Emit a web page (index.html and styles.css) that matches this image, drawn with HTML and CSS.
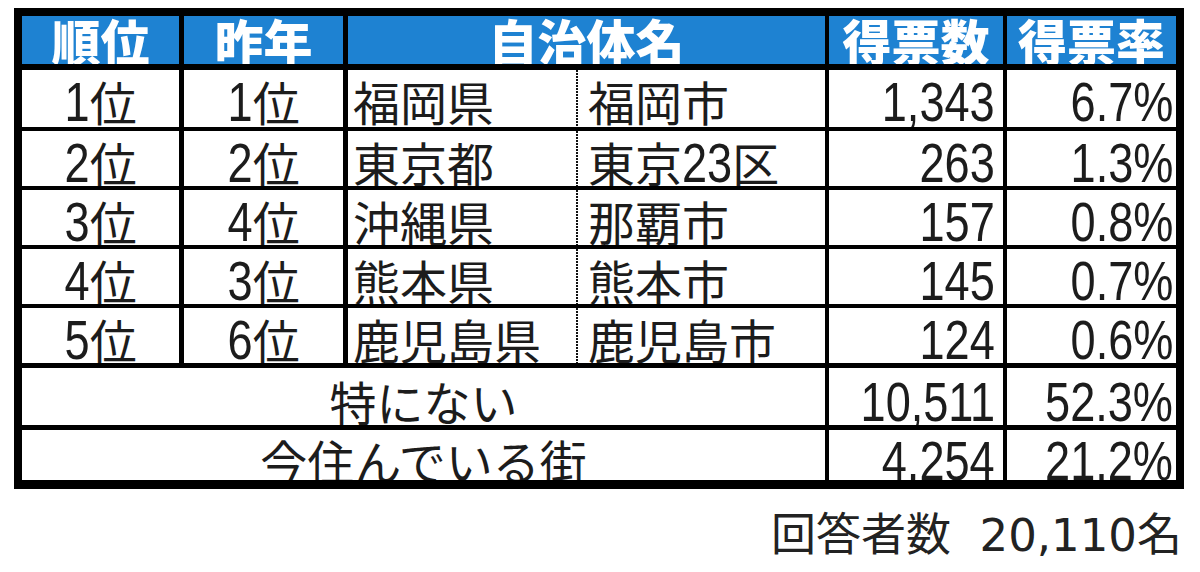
FILE: index.html
```html
<!DOCTYPE html>
<html lang="ja">
<head>
<meta charset="utf-8">
<link rel="stylesheet" href="styles.css">
</head>
<body>
<div class="page">
  <div class="table">
    <div class="row head">
      <div class="c c1">順位</div>
      <div class="c c2">昨年</div>
      <div class="c c34">自治体名</div>
      <div class="c c5">得票数</div>
      <div class="c c6">得票率</div>
    </div>
    <div class="row r1">
      <div class="c c1"><span class="n">1</span>位</div>
      <div class="c c2"><span class="n">1</span>位</div>
      <div class="c c3">福岡県</div>
      <div class="c c4">福岡市</div>
      <div class="c c5"><span class="nv">1,343</span></div>
      <div class="c c6"><span class="nv">6.7%</span></div>
    </div>
    <div class="row r2">
      <div class="c c1"><span class="n">2</span>位</div>
      <div class="c c2"><span class="n">2</span>位</div>
      <div class="c c3">東京都</div>
      <div class="c c4">東京<span class="n n2">23</span>区</div>
      <div class="c c5"><span class="nv">263</span></div>
      <div class="c c6"><span class="nv">1.3%</span></div>
    </div>
    <div class="row r3">
      <div class="c c1"><span class="n">3</span>位</div>
      <div class="c c2"><span class="n">4</span>位</div>
      <div class="c c3">沖縄県</div>
      <div class="c c4">那覇市</div>
      <div class="c c5"><span class="nv">157</span></div>
      <div class="c c6"><span class="nv">0.8%</span></div>
    </div>
    <div class="row r4">
      <div class="c c1"><span class="n">4</span>位</div>
      <div class="c c2"><span class="n">3</span>位</div>
      <div class="c c3">熊本県</div>
      <div class="c c4">熊本市</div>
      <div class="c c5"><span class="nv">145</span></div>
      <div class="c c6"><span class="nv">0.7%</span></div>
    </div>
    <div class="row r5">
      <div class="c c1"><span class="n">5</span>位</div>
      <div class="c c2"><span class="n">6</span>位</div>
      <div class="c c3">鹿児島県</div>
      <div class="c c4">鹿児島市</div>
      <div class="c c5"><span class="nv">124</span></div>
      <div class="c c6"><span class="nv">0.6%</span></div>
    </div>
    <div class="row r6">
      <div class="c c14">特にない</div>
      <div class="c c5"><span class="nv">10,511</span></div>
      <div class="c c6"><span class="nv">52.3%</span></div>
    </div>
    <div class="row r7">
      <div class="c c14">今住んでいる街</div>
      <div class="c c5"><span class="nv">4,254</span></div>
      <div class="c c6"><span class="nv">21.2%</span></div>
    </div>
  </div>
  <div class="caption">回答者数&nbsp;&nbsp;20,110名</div>
</div>
</body>
</html>
```

FILE: styles.css
```css
body {
  margin: 0;
  background: #ffffff;
}

.page {
  padding: 8px 16px 0 14px;
}

.table {
  width: 1170px;
  box-sizing: border-box;
  border: 8px solid #000;
  border-bottom-width: 9px;
}

.row {
  display: grid;
  grid-template-columns: 162px 164px 230px 251px 178px 169px;
  box-sizing: border-box;
  border-bottom: 4px solid #000;
}

.head {
  height: 54px;
  border-bottom-width: 6px;
  background: #1e82d2;
}

.r1 { height: 61px; }
.r2, .r3, .r4 { height: 59px; }
.r5 { height: 60px; border-bottom-width: 5px; }
.r6 { height: 62px; border-bottom-width: 5px; }
.r7 { height: 50px; border-bottom: 0; }

.c {
  box-sizing: border-box;
  border-right: 4px solid #000;
  overflow: hidden;
  white-space: nowrap;
  font-family: "Noto Sans CJK JP", sans-serif;
  font-size: 47px;
  line-height: 47px;
  color: #1c1c1c;
  padding-top: 7px;
}

.r6 .c { padding-top: 9px; }
.r7 .c { padding-top: 6px; }

.c1, .c2 {
  border-right-width: 5px;
  text-align: center;
}

.c3 {
  border-right: 0;
  padding-left: 5px;
  background: repeating-linear-gradient(to bottom, #111 0 2px, transparent 2px 3px) right top / 2px 100% no-repeat;
}

.c4 {
  padding-left: 10px;
}

.c5 {
  text-align: right;
  padding-right: 8px;
}

.c6 {
  border-right: 0;
  text-align: right;
  padding-right: 3px;
}

.c34 {
  grid-column: span 2;
  text-align: center;
}

.c14 {
  grid-column: span 4;
  text-align: center;
}

.n, .nv {
  display: inline-block;
  font-family: "Liberation Sans", sans-serif;
  font-size: 55px;
  transform: scaleX(0.82);
  transform-origin: right center;
}

.n {
  margin-left: -5px;
}

.n2 {
  margin-left: -11px;
}

.head .c {
  color: #ffffff;
  font-weight: 900;
  font-size: 49px;
  line-height: 48px;
  padding: 0;
  text-align: center;
}

.caption {
  margin-top: 25px;
  margin-right: 2px;
  text-align: right;
  font-family: "DejaVu Sans", "Noto Sans CJK JP", sans-serif;
  font-size: 45px;
  line-height: 44px;
  color: #222;
}
```
